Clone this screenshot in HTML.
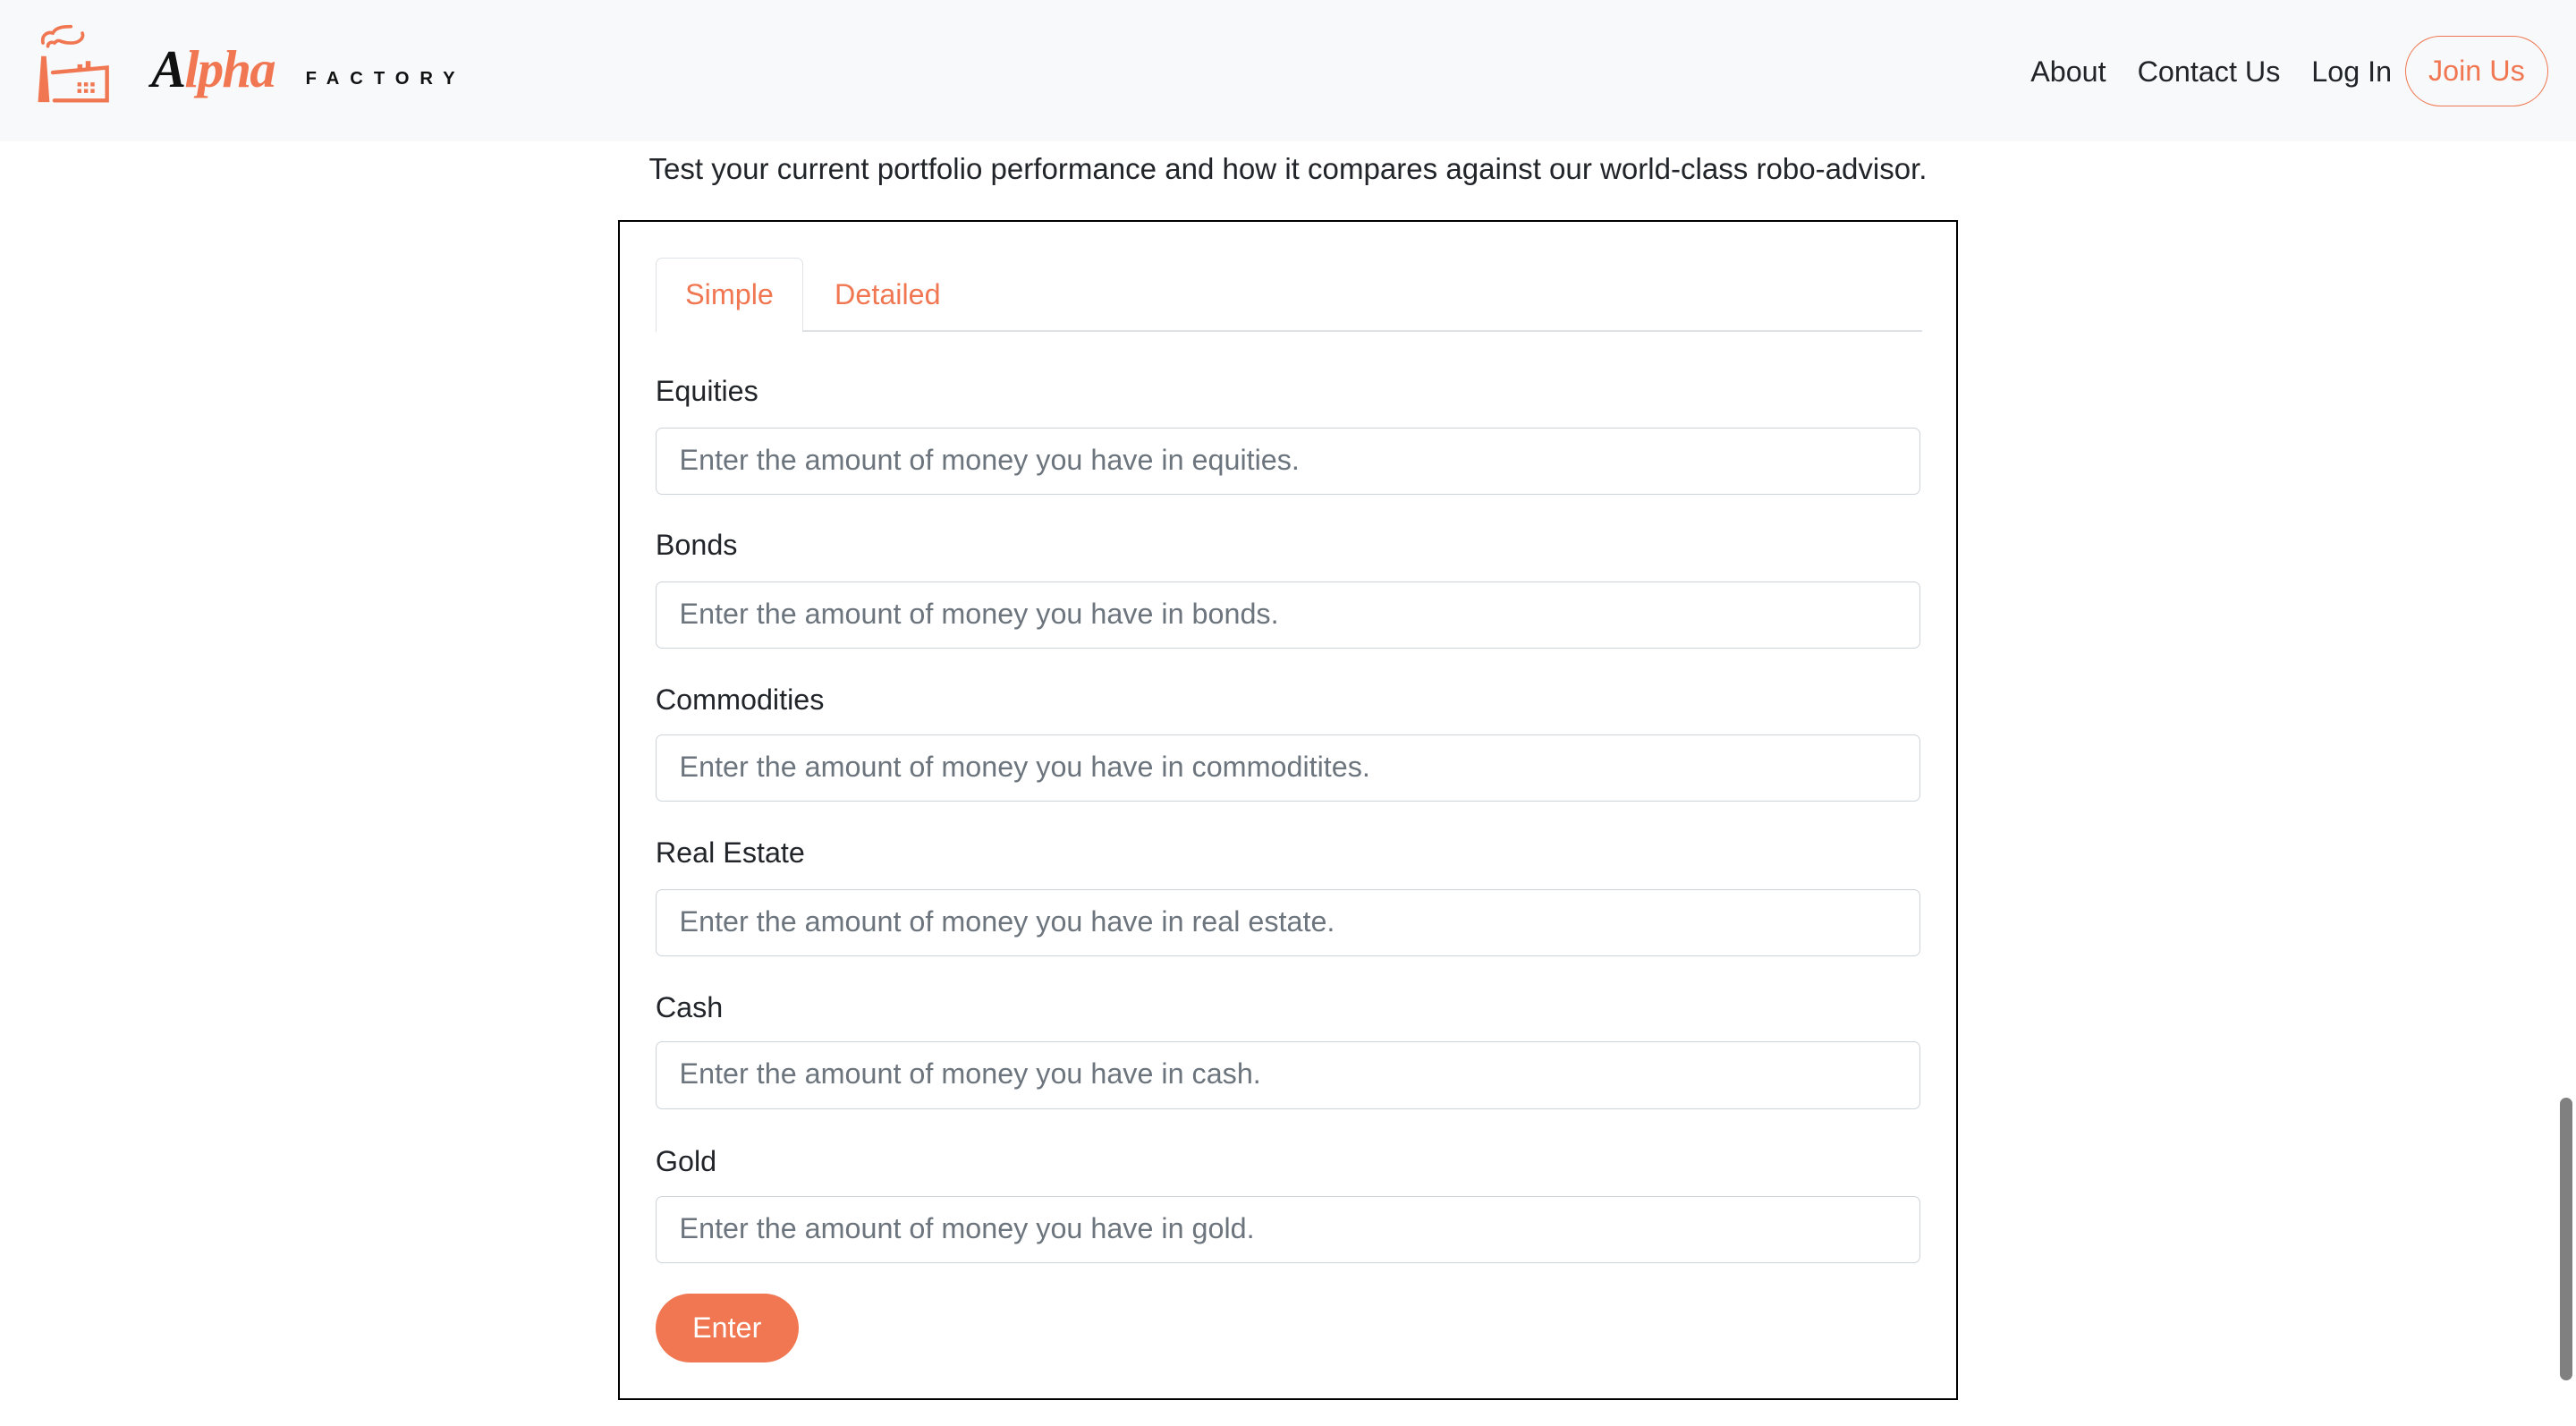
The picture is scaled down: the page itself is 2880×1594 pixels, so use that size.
<!DOCTYPE html>
<html><head><meta charset="utf-8">
<style>
html,body{margin:0;padding:0;background:#fff;overflow:hidden}
body{width:2880px;height:1594px}
#w{zoom:1.83673;width:1568px;height:868px;position:relative;font-family:"Liberation Sans",sans-serif;color:#212529;font-size:17.6px}
.hdr{position:absolute;left:0;top:0;width:1568px;height:86px;background:#f8f9fa}
.nav{position:absolute;top:34px;font-size:17.6px;color:#212529}
.join{position:absolute;left:1464px;top:22px;width:87px;height:43px;border:1px solid #f07751;border-radius:22px;color:#f07751;box-sizing:border-box;text-align:center;line-height:42px;font-size:17.6px}
.lead{position:absolute;left:0;width:1568px;top:93px;text-align:center;font-size:18px}
.card{position:absolute;left:376px;top:134px;width:816px;height:718px;border:1.2px solid #000;box-sizing:border-box}
.tabline{position:absolute;left:399px;top:201px;width:771px;height:1px;background:#dee2e6}
.tab{position:absolute;left:399px;top:157px;width:90px;height:45px;border:1px solid #dee2e6;border-bottom:none;border-radius:4px 4px 0 0;background:#fff;box-sizing:border-box;color:#f07751;text-align:center;line-height:44px}
.tab2{position:absolute;left:508px;top:157px;line-height:45px;color:#f07751}
.lbl{position:absolute;left:399px;font-size:17.6px}
.inp{position:absolute;left:399px;width:770px;height:41px;border:1px solid #ced4da;border-radius:4px;box-sizing:border-box;padding-left:14px;line-height:39px;color:#6c757d;font-size:17.6px}
.btn{position:absolute;left:399px;top:787px;width:87px;height:42px;border-radius:21px;background:#f07751;color:#fff;text-align:center;line-height:42px;font-size:17.6px}
.sb{position:absolute;left:1558px;top:668px;width:8px;height:172px;border-radius:4px;background:#808080}
</style></head><body><div id="w">
<div class="hdr">
<svg style="position:absolute;left:20px;top:14px" width="50" height="52" viewBox="0 0 50 52" fill="none" stroke="#f07751" stroke-width="2" stroke-linecap="round">
<path d="M6 12c-1-5 3-7 6-6 2-4 8-4 11-4"/><path d="M9 14c0-2 2-3 4-2 1-1 2-2 4-1 3 1 9 2 12-1 2-2 1-4 1-4"/>
<path d="M5 20 L3 48 L10 48 L8 20 Z" fill="#f07751" stroke="none"/>
<path d="M12 30 L45 27 L45 47 L13 47" stroke-width="2.4"/>
<rect x="27" y="25" width="3" height="4" fill="#f07751" stroke="none"/><rect x="32" y="23" width="3" height="5" fill="#f07751" stroke="none"/>
<g fill="#f07751" stroke="none"><rect x="27" y="36" width="2.4" height="2.4"/><rect x="31" y="36" width="2.4" height="2.4"/><rect x="35" y="36" width="2.4" height="2.4"/><rect x="27" y="40" width="2.4" height="2.4"/><rect x="31" y="40" width="2.4" height="2.4"/><rect x="35" y="40" width="2.4" height="2.4"/></g>
</svg>
<div style="position:absolute;left:92px;top:24px;font-family:'Liberation Serif',serif;font-style:italic;font-size:32px;font-weight:bold;letter-spacing:-1px"><span style="color:#111">A</span><span style="color:#f07751">lpha</span></div>
<div style="position:absolute;left:186px;top:42px;font-size:11px;font-weight:bold;letter-spacing:6.5px;color:#111">FACTORY</div>
<div class="nav" style="left:1236px">About</div>
<div class="nav" style="left:1301px">Contact Us</div>
<div class="nav" style="left:1407px">Log In</div>
<div class="join">Join Us</div>
</div>
<div class="lead">Test your current portfolio performance and how it compares against our world-class robo-advisor.</div>
<div class="card"></div>
<div class="tabline"></div>
<div class="tab">Simple</div>
<div class="tab2">Detailed</div>
<div class="lbl" style="top:228px">Equities</div>
<div class="inp" style="top:260px">Enter the amount of money you have in equities.</div>
<div class="lbl" style="top:322px">Bonds</div>
<div class="inp" style="top:354px">Enter the amount of money you have in bonds.</div>
<div class="lbl" style="top:416px">Commodities</div>
<div class="inp" style="top:447px">Enter the amount of money you have in commoditites.</div>
<div class="lbl" style="top:509px">Real Estate</div>
<div class="inp" style="top:541px">Enter the amount of money you have in real estate.</div>
<div class="lbl" style="top:603px">Cash</div>
<div class="inp" style="top:634px">Enter the amount of money you have in cash.</div>
<div class="lbl" style="top:697px">Gold</div>
<div class="inp" style="top:728px">Enter the amount of money you have in gold.</div>
<div class="btn">Enter</div>
<div class="sb"></div>
</div></body></html>
